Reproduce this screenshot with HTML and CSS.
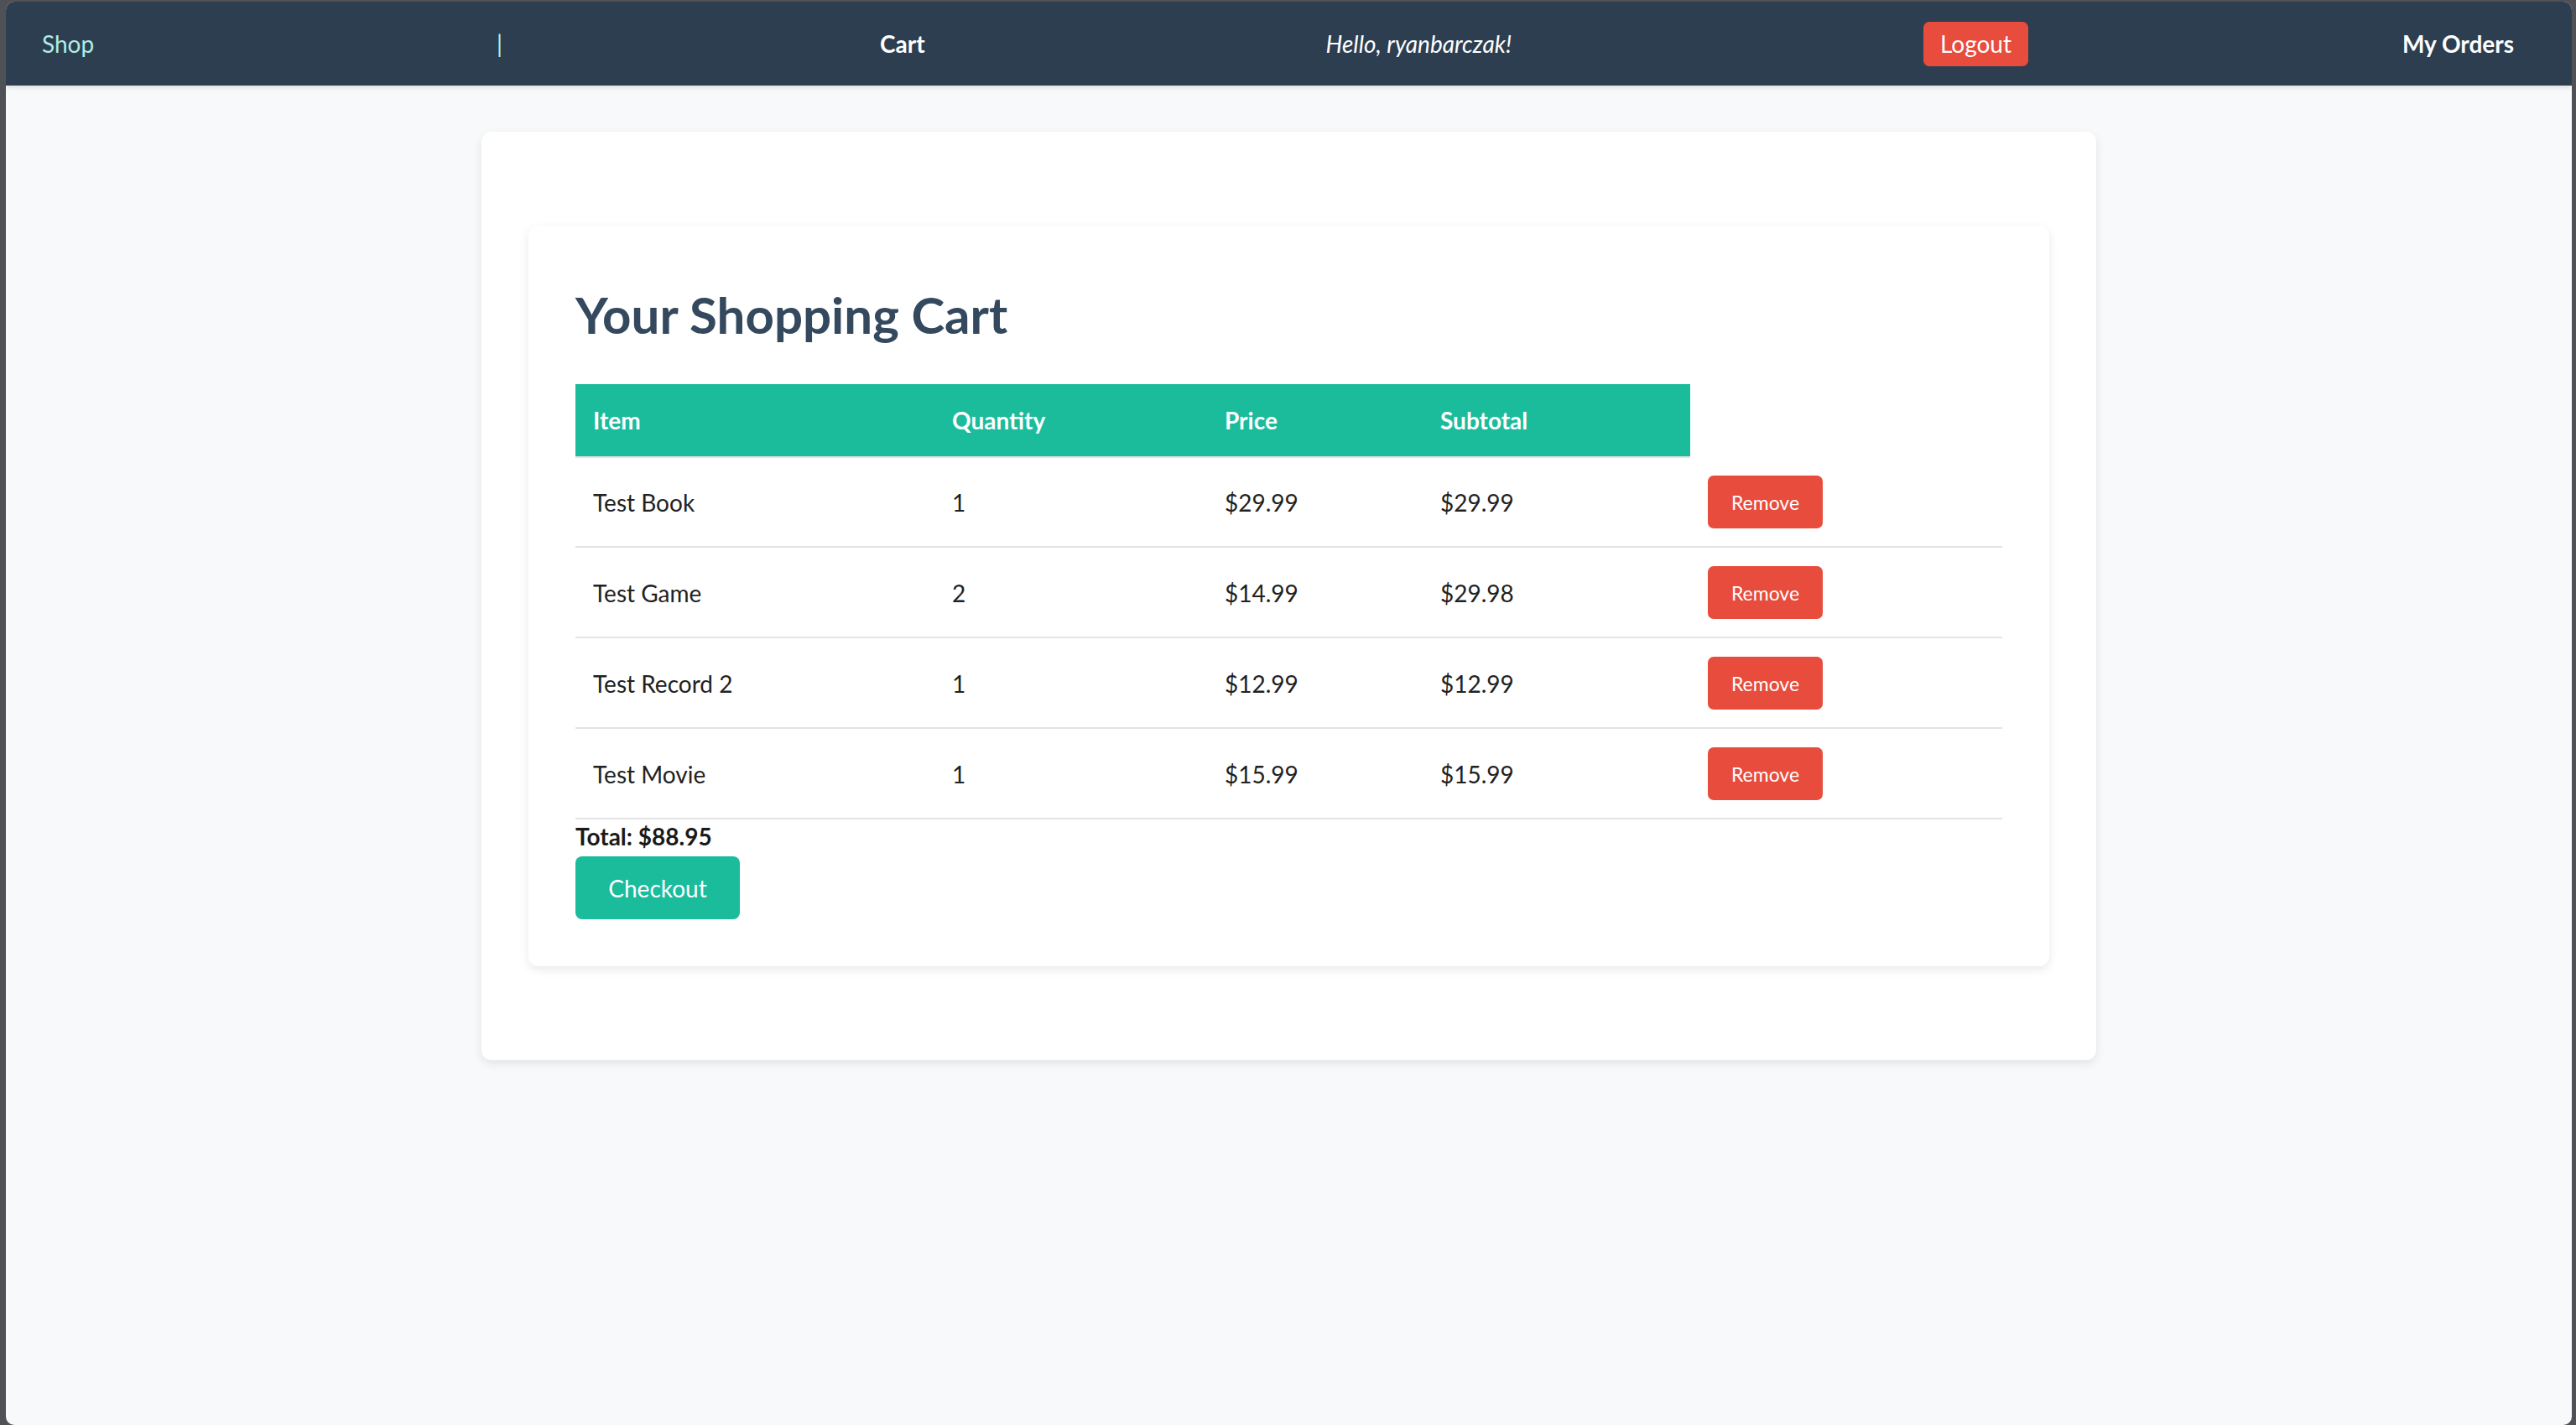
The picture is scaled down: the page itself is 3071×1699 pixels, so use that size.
FILE: index.html
```html
<!DOCTYPE html>
<html lang="en">
<head>
<meta charset="utf-8">
<title>Your Shopping Cart</title>
<link rel="stylesheet" href="styles.css">
</head>
<body>
<div class="window">
  <nav class="topnav">
    <a class="nav-shop" href="#">Shop</a>
    <span class="nav-sep">|</span>
    <a class="nav-link nav-cart" href="#">Cart</a>
    <span class="nav-hello">Hello, ryanbarczak!</span>
    <button class="btn-logout">Logout</button>
    <a class="nav-link" href="#">My Orders</a>
  </nav>
  <main class="main">
    <section class="outer-card">
      <div class="cart-card">
        <h2 class="cart-title">Your Shopping Cart</h2>
        <table class="cart-table">
          <colgroup>
            <col class="c-item"><col class="c-qty"><col class="c-price"><col class="c-sub"><col class="c-act">
          </colgroup>
          <thead>
            <tr><th>Item</th><th>Quantity</th><th>Price</th><th>Subtotal</th></tr>
          </thead>
          <tbody>
            <tr><td>Test Book</td><td>1</td><td>$29.99</td><td>$29.99</td><td><button class="btn-remove">Remove</button></td></tr>
            <tr><td>Test Game</td><td>2</td><td>$14.99</td><td>$29.98</td><td><button class="btn-remove">Remove</button></td></tr>
            <tr><td>Test Record 2</td><td>1</td><td>$12.99</td><td>$12.99</td><td><button class="btn-remove">Remove</button></td></tr>
            <tr><td>Test Movie</td><td>1</td><td>$15.99</td><td>$15.99</td><td><button class="btn-remove">Remove</button></td></tr>
          </tbody>
        </table>
        <div class="cart-total">Total: $88.95</div>
        <button class="btn-checkout">Checkout</button>
      </div>
    </section>
  </main>
</div>
</body>
</html>
```

FILE: styles.css
```css
html, body {
  margin: 0;
  padding: 0;
}
body {
  background: #4f5157;
  font-family: Lato, "Open Sans", "Liberation Sans", sans-serif;
  overflow: hidden;
}
.window {
  margin: 2px 5px 0 7px;
  height: 1697px;
  background: #f8f9fa;
  border-radius: 10px;
  overflow: hidden;
}
.topnav {
  height: 100px;
  background: #2c3e50;
  display: flex;
  align-items: center;
  justify-content: space-between;
  padding: 0 69px 0 43px;
  box-shadow: 0 2px 6px rgba(0, 0, 0, 0.12);
  position: relative;
  font-size: 28px;
}
.topnav a {
  text-decoration: none;
}
.nav-shop {
  color: #b0ece6;
}
.nav-sep {
  color: #b0ece6;
  font-weight: 400;
  margin-left: 34px;
}
.nav-link {
  color: #ffffff;
  font-weight: 700;
}
.nav-cart {
  margin-left: 4px;
}
.nav-hello {
  color: #ffffff;
  font-style: italic;
  margin-left: 32px;
}
.btn-logout {
  font-family: inherit;
  font-size: 28px;
  color: #ffffff;
  background: #e74c3c;
  border: none;
  border-radius: 7px;
  height: 53px;
  padding: 0 20px;
  line-height: 53px;
  margin-left: 45px;
}
.main {
  padding-top: 55px;
}
.outer-card {
  width: 1925px;
  box-sizing: border-box;
  margin: 0 auto;
  background: #ffffff;
  border-radius: 12px;
  padding: 56px;
  box-shadow: 0 4px 12px rgba(0, 0, 0, 0.09);
}
.cart-card {
  margin: 56px 0;
  background: #ffffff;
  border-radius: 12px;
  padding: 56px;
  box-shadow: 0 4px 12px rgba(0, 0, 0, 0.09);
}
.cart-title {
  margin: 14px 0 47px;
  font-size: 60px;
  line-height: 72px;
  font-weight: 700;
  color: #34495e;
}
.cart-table {
  width: 1701px;
  border-collapse: collapse;
  table-layout: fixed;
  font-size: 28px;
  color: #222222;
}
.c-item { width: 428px; }
.c-qty { width: 325px; }
.c-price { width: 257px; }
.c-sub { width: 319px; }
.c-act { width: 372px; }
.cart-table th {
  background: #1abc9c;
  color: #ffffff;
  font-weight: 700;
  text-align: left;
  padding: 24px 21px;
  line-height: 38px;
  border-bottom: 2px solid #e3e3e3;
}
.cart-table td {
  padding: 22px 21px 21px;
  line-height: 38px;
  border-bottom: 2px solid #e3e3e3;
  vertical-align: middle;
}
.btn-remove {
  font-family: inherit;
  font-size: 23px;
  color: #ffffff;
  background: #e74c3c;
  border: none;
  border-radius: 7px;
  width: 137px;
  height: 63px;
  padding: 0;
  display: block;
}
.cart-total {
  font-size: 28px;
  font-weight: 700;
  color: #1a1a1a;
  line-height: 40px;
}
.btn-checkout {
  margin-top: 4px;
  font-family: inherit;
  font-size: 28px;
  color: #ffffff;
  background: #1abc9c;
  border: none;
  border-radius: 8px;
  width: 196px;
  height: 75px;
  padding: 0;
  display: block;
}
```
